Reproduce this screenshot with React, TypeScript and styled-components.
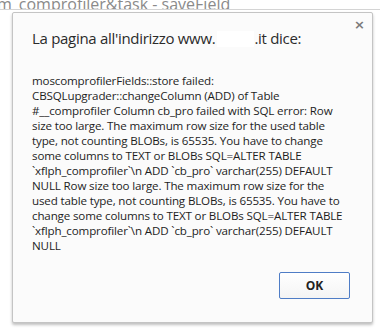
import React from "react";
import styled, { createGlobalStyle } from "styled-components";

const GlobalStyle = createGlobalStyle`
  html, body {
    margin: 0;
    padding: 0;
    background: #ffffff;
  }
  body {
    font-family: "Open Sans", "Noto Sans", "DejaVu Sans", sans-serif;
    width: 380px;
    height: 335px;
    overflow: hidden;
  }
`;

const Page = styled.div`
  width: 380px;
  height: 335px;
  display: flex;
  flex-direction: column;
`;

const UrlStrip = styled.div`
  height: 9px;
  border-bottom: 1px solid #d4d4d4;
  overflow: hidden;
  display: flex;
  align-items: flex-end;
`;

const UrlText = styled.span`
  font-size: 16px;
  line-height: 16px;
  color: #8a8a8a;
  margin-left: -3px;
  margin-bottom: -3px;
  white-space: nowrap;
`;

const Dialog = styled.div`
  box-sizing: border-box;
  margin: 2px 0 0 12px;
  width: 361px;
  height: 311px;
  background: #fbfbfb;
  border: 1px solid #c4c4c4;
  border-radius: 2px;
  box-shadow: 0 2px 3px rgba(0, 0, 0, 0.25);
  display: flex;
  flex-direction: column;
  padding: 15px 22px 0 19px;
`;

const Header = styled.div`
  display: flex;
  justify-content: space-between;
  align-items: flex-start;
`;

const Title = styled.div`
  font-size: 15px;
  line-height: 20px;
  color: #2b2b2b;
  letter-spacing: -0.3px;
  white-space: nowrap;
`;

const Hidden = styled.span`
  display: inline-block;
  width: 37px;
  height: 16px;
  background: #ffffff;
  vertical-align: -3px;
  margin-left: 2px;
`;

const CloseBtn = styled.span`
  font-family: "DejaVu Sans", sans-serif;
  font-size: 13px;
  font-weight: bold;
  line-height: 13px;
  color: #7a7a7a;
  margin-top: -10px;
  margin-right: -15px;
`;

const Message = styled.div`
  margin-top: 25px;
  font-size: 11.6px;
  line-height: 15px;
  color: #1e1e1e;
  letter-spacing: -0.15px;
`;

const Line = styled.div`
  white-space: pre;
  height: 15px;
`;

const Footer = styled.div`
  margin-top: auto;
  margin-bottom: 23px;
  display: flex;
  justify-content: flex-end;
`;

const OkButton = styled.button`
  width: 71px;
  height: 27px;
  box-sizing: border-box;
  border: 1px solid #4f7dc6;
  border-radius: 2px;
  background: linear-gradient(#ffffff, #f4f4f4);
  font-family: "Open Sans", "Noto Sans", sans-serif;
  font-weight: bold;
  font-size: 12px;
  color: #222;
  padding: 0;
  cursor: pointer;
`;

const lines = [
  "moscomprofilerFields::store failed:",
  "CBSQLupgrader::changeColumn (ADD) of Table",
  "#__comprofiler Column cb_pro failed with SQL error: Row",
  "size too large. The maximum row size for the used table",
  "type, not counting BLOBs, is 65535. You have to change",
  "some columns to TEXT or BLOBs SQL=ALTER TABLE",
  "`xflph_comprofiler`\\n ADD `cb_pro` varchar(255) DEFAULT",
  "NULL Row size too large. The maximum row size for the",
  "used table type, not counting BLOBs, is 65535. You have to",
  "change some columns to TEXT or BLOBs SQL=ALTER TABLE",
  "`xflph_comprofiler`\\n ADD `cb_pro` varchar(255) DEFAULT",
  "NULL",
];

export default function App() {
  return (
    <>
      <GlobalStyle />
      <Page>
        <UrlStrip>
          <UrlText>m_comprofiler&amp;task - saveField</UrlText>
        </UrlStrip>
        <Dialog>
          <Header>
            <Title>
              La pagina all'indirizzo www.
              <Hidden />
              .it dice:
            </Title>
            <CloseBtn>×</CloseBtn>
          </Header>
          <Message>
            {lines.map((l, i) => (
              <Line key={i}>{l}</Line>
            ))}
          </Message>
          <Footer>
            <OkButton>OK</OkButton>
          </Footer>
        </Dialog>
      </Page>
    </>
  );
}
